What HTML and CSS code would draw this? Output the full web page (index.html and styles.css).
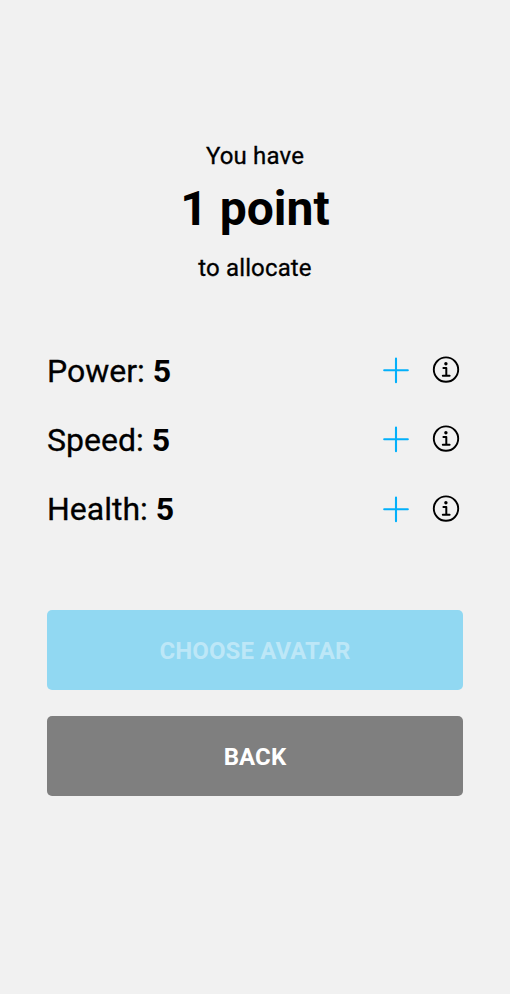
FILE: index.html
```html
<!DOCTYPE html>
<html lang="en">
<head>
<meta charset="utf-8">
<title>Allocate points</title>
<link rel="stylesheet" href="styles.css">
</head>
<body>
<svg class="sprite" aria-hidden="true">
  <symbol id="plus" viewBox="0 0 28 28"><path d="M14 2.3v23.6M2.2 14h23.6" fill="none" stroke="#03b0fa" stroke-width="2.1" stroke-linecap="round"/></symbol>
  <symbol id="info" viewBox="0 0 28 28"><circle cx="14" cy="14" r="12.2" fill="none" stroke="#000" stroke-width="1.9"/><circle cx="13.9" cy="8.1" r="1.7"/><path d="M11.4 12.3h2.9v7.8M10.8 20.1h6.8" fill="none" stroke="#000" stroke-width="2" stroke-linecap="round" stroke-linejoin="round"/></symbol>
</svg>
<main class="screen">
  <header class="summary">
    <p class="label">You have</p>
    <h1 class="points">1 point</h1>
    <p class="label">to allocate</p>
  </header>
  <section class="stats">
    <div class="stat"><p class="name">Power: <b>5</b></p><svg class="icon"><use href="#plus"/></svg><svg class="icon"><use href="#info"/></svg></div>
    <div class="stat"><p class="name">Speed: <b>5</b></p><svg class="icon"><use href="#plus"/></svg><svg class="icon"><use href="#info"/></svg></div>
    <div class="stat"><p class="name">Health: <b>5</b></p><svg class="icon"><use href="#plus"/></svg><svg class="icon"><use href="#info"/></svg></div>
  </section>
  <div class="actions">
    <button class="button choose" disabled>CHOOSE AVATAR</button>
    <button class="button back">BACK</button>
  </div>
</main>
</body>
</html>
```
FILE: styles.css
```css
* { box-sizing: border-box; }
body { margin: 0; background: #f1f1f1; color: #000; font-family: Roboto, sans-serif; }
p, h1 { margin: 0; }
.sprite { display: none; }
.screen { height: 994px; padding: 140px 47px 0; }
.summary { text-align: center; }
.label { font-size: 24px; line-height: 32px; font-weight: 400; letter-spacing: .15px; -webkit-text-stroke: .3px #000; }
.points { font-size: 48px; line-height: 64px; font-weight: 700; margin: 5px 0 11px; }
.stats { margin-top: 51.6px; }
.stat { display: flex; align-items: center; height: 69.2px; }
.name { flex: 1; padding-top: 1.4px; font-size: 32px; font-weight: 400; -webkit-text-stroke: .3px #000; }
.name b { font-weight: 700; -webkit-text-stroke: 0; }
.icon { width: 28px; height: 28px; margin-right: 3px; margin-left: 19px; transform: translateY(.3px); }
.icon:last-child { transform: translateY(-.4px); }
.actions { display: grid; gap: 26.6px; margin-top: 66.8px; }
.button { height: 79.8px; border: 0; border-radius: 5px; font: 700 24px Roboto, sans-serif; letter-spacing: .1px; color: #fff; padding: 2px 0 0; }
.choose { background: #91d8f2; color: #bde7f7; }
.back { background: #7f7f7f; }
```
